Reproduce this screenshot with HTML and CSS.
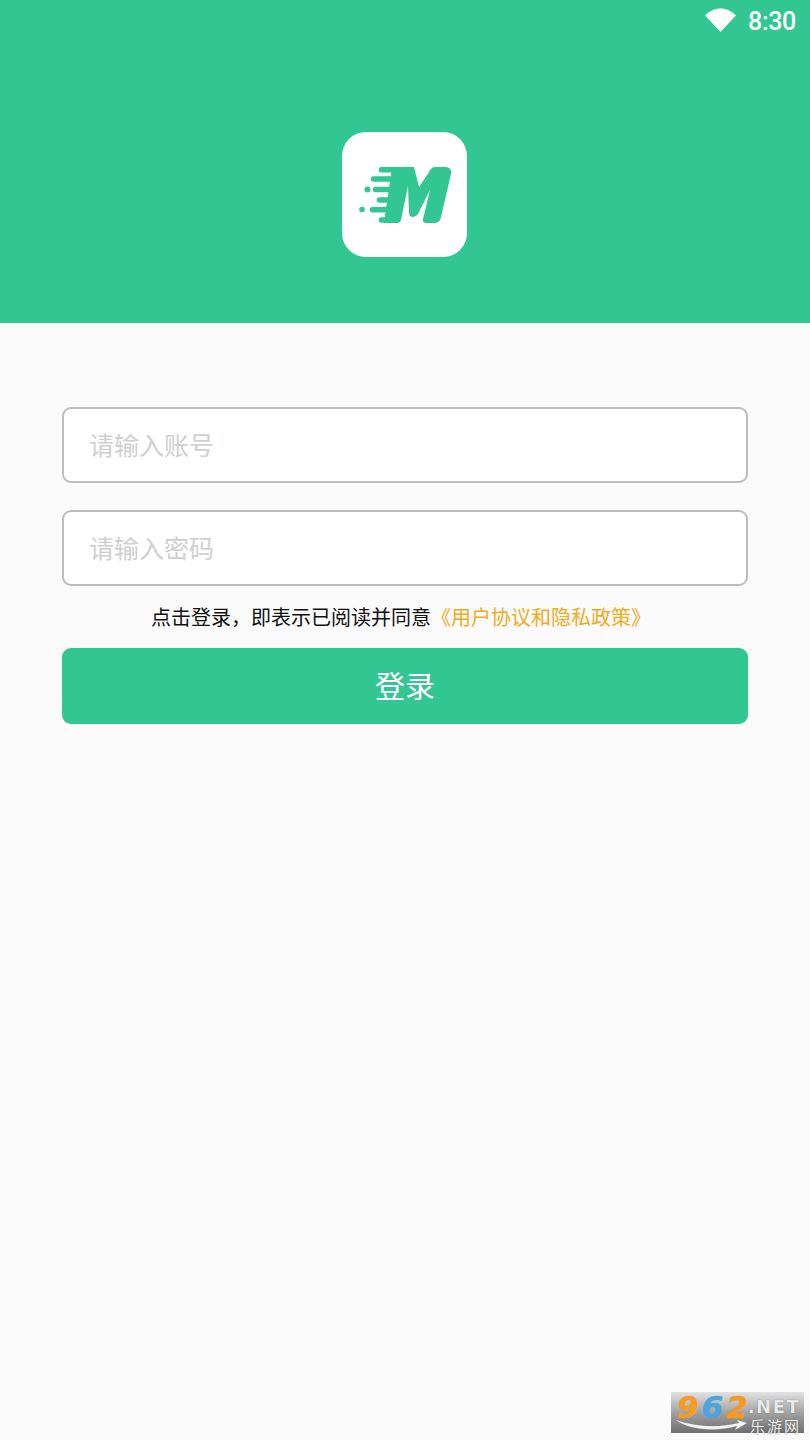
FILE: index.html
```html
<!DOCTYPE html>
<html lang="zh">
<head>
<meta charset="utf-8">
<title>登录</title>
<link rel="stylesheet" href="styles.css">
</head>
<body>
<div class="page">
  <header class="hero">
    <div class="status">
      <svg class="wifi" width="31" height="24" viewBox="0 0 31 24"><path d="M0 7.500C4.200 3.200 9.600 0.500 15.500 0.500S26.800 3.200 31 7.500L15.500 24z" fill="#fff"/></svg>
      <span class="time">8:30</span>
    </div>
    <div class="logo">
      <svg width="125" height="125" viewBox="0 0 125 125">
        <path fill="#32c692" d="M48 35H72L77 55L89 37Q90 35 93 35H103Q110 35 109 42L99 85Q98 91 92 91H84Q80 91 81 87L88 58L76 82Q74 85 71 85Q67 85 67 81L66 54L59 88Q58 91 55 91H42L50 35Z"/>
        <g stroke="#32c692" stroke-width="5.500" stroke-linecap="round" fill="none">
          <path d="M39.500 37.800H52"/>
          <path d="M31.500 47H52"/>
          <path d="M33.500 57.500H50"/>
          <path d="M37.500 68H50"/>
          <path d="M30.500 77.800H46"/>
          <path d="M39.500 88H46"/>
        </g>
        <circle cx="25.500" cy="57.500" r="3" fill="#32c692"/>
        <circle cx="20" cy="77.500" r="2.800" fill="#32c692"/>
      </svg>
    </div>
  </header>
  <main class="form">
    <div class="field">请输入账号</div>
    <div class="field">请输入密码</div>
    <p class="terms">点击登录，即表示已阅读并同意<span class="link">《用户协议和隐私政策》</span></p>
    <button class="submit" type="button">登录</button>
  </main>
  <div class="badge">
    <svg class="swoosh" width="133" height="41" viewBox="0 0 133 41"><path d="M5 28C24 35 48 36 68 31L66 28L76 31L64 38L66 34C44 40 18 38 5 28Z" fill="#f2f2f2"/></svg>
    <div class="badge-top"><span class="num">9</span><span class="num blue">6</span><span class="num">2</span><span class="net">.NET</span></div>
    <div class="badge-sub">乐游网</div>
  </div>
</div>
</body>
</html>
```
FILE: styles.css
```css
html, body { margin: 0; padding: 0; }
body {
  width: 810px;
  height: 1440px;
  overflow: hidden;
  background: #fafafa;
  font-family: "Noto Sans CJK SC", "Noto Sans", sans-serif;
}
.page { position: relative; width: 810px; height: 1440px; }
.hero {
  height: 323px;
  background: #32c692;
  display: flex;
  flex-direction: column;
  align-items: center;
}
.status {
  align-self: stretch;
  height: 42px;
  display: flex;
  justify-content: flex-end;
  align-items: center;
  gap: 12px;
  padding-right: 14px;
}
.wifi { margin-top: -3px; }
.time {
  font-family: Roboto, sans-serif;
  font-size: 25px;
  font-weight: 500;
  letter-spacing: -0.3px;
  color: #fff;
}
.logo {
  margin-top: 90px;
  margin-right: 1px;
  width: 125px;
  height: 125px;
  border-radius: 24px;
  background: #fff;
  overflow: hidden;
}
.logo svg { display: block; }
.form {
  padding: 84px 62px 0;
  display: flex;
  flex-direction: column;
}
.field {
  box-sizing: border-box;
  height: 76px;
  border: 2px solid #bdbdbd;
  border-radius: 9px;
  background: #fff;
  padding-left: 26px;
  margin-bottom: 27px;
  font-size: 25px;
  line-height: 70px;
  color: #cfcfcf;
  text-indent: -1px;
}
.field + .field { margin-bottom: 0; }
.terms {
  margin: 15px 0 15px;
  padding-right: 8px;
  height: 32px;
  line-height: 32px;
  font-size: 20px;
  text-align: center;
  color: #111;
}
.link { color: #f0ab1e; }
.submit {
  height: 76px;
  border: 0;
  border-radius: 9px;
  background: #32c692;
  color: #fff;
  font-family: inherit;
  font-size: 30px;
  padding: 0 0 4px;
}
.badge {
  position: absolute;
  left: 671px;
  top: 1392px;
  width: 133px;
  height: 41px;
  background: linear-gradient(#e2e2e2, #a2a2a2 50%, #6e6e6e 100%);
}
.swoosh { position: absolute; left: 0; top: 0; }
.badge-top {
  position: relative;
  display: flex;
  align-items: flex-start;
  height: 26px;
  padding-left: 6px;
}
.num {
  font-family: "DejaVu Sans", sans-serif;
  font-weight: bold;
  font-style: italic;
  font-size: 31px;
  line-height: 22px;
  padding-top: 4px;
  margin-right: 3px;
  color: #f59a23;
  -webkit-text-stroke: 0.6px currentColor;
}
.blue { color: #4da3e0; }
.net {
  font-family: "DejaVu Sans", sans-serif;
  font-weight: bold;
  font-size: 18px;
  line-height: 20px;
  padding-top: 5px;
  color: #e8e8e8;
  letter-spacing: 1.5px;
  margin-left: -3px;
  text-shadow: 0 0 1px #555;
}
.badge-sub {
  position: relative;
  text-align: right;
  padding-right: 3px;
  font-size: 15px;
  line-height: 15px;
  color: #f4f4f4;
  letter-spacing: 2px;
  text-shadow: 0 0 1px #444;
}
```
